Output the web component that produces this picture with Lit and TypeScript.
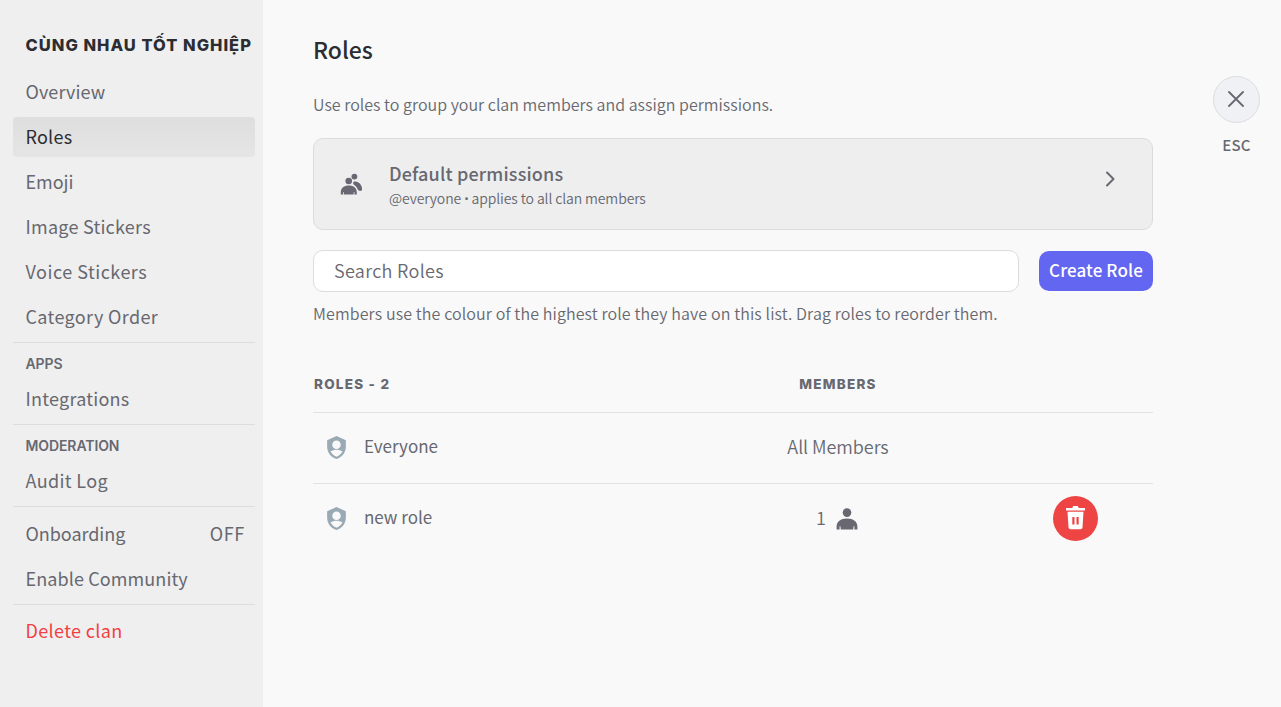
import { LitElement, html, css, svg } from "lit";
import { classMap } from "lit/directives/class-map.js";

type Item = { label: string; state?: string; kind?: string };
type Group = { title?: string; items: Item[] };

const groups: Group[] = [
  {
    items: [
      { label: "Overview", kind: "tight" },
      { label: "Roles", kind: "active" },
      { label: "Emoji", kind: "tighter" },
      { label: "Image Stickers" },
      { label: "Voice Stickers", kind: "wider" },
      { label: "Category Order", kind: "wide" },
    ],
  },
  { title: "Apps", items: [{ label: "Integrations" }] },
  { title: "Moderation", items: [{ label: "Audit Log", kind: "wide" }] },
  { items: [{ label: "Onboarding", state: "OFF", kind: "tighter" }, { label: "Enable Community", kind: "tight" }] },
  { items: [{ label: "Delete clan", kind: "danger wide" }] },
];

const roles = [
  { name: "Everyone", members: null },
  { name: "new role", members: 1 },
];

const person = svg`<circle cx="12" cy="5.6" r="4.3"></circle>
  <path d="M1.6 22.6V19.2C1.6 14.6 5.6 11.4 12 11.4s10.4 3.2 10.4 7.8v3.4h-3v-3.3h-.8l-.4 3.3H5.8l-.4-3.3h-.8v3.3z"></path>`;

class ClanSidebar extends LitElement {
  static styles = css`
    :host {
      display: block;
      box-sizing: border-box;
      width: 263px;
      padding: 30px 8px 0 13px;
      background: #efefef;
      color: #676870;
    }
    .clan {
      padding-left: 12.5px;
      margin-bottom: 12px;
      font: 800 16.5px/30px Inter, sans-serif;
      letter-spacing: 1px;
      text-transform: uppercase;
      white-space: nowrap;
      color: #2b2d33;
    }
    .group {
      display: flex;
      flex-direction: column;
      gap: 5px;
      padding-bottom: 5px;
    }
    .group + .group {
      border-top: 1px solid #dddddf;
      padding-top: 7px;
    }
    .group.titled {
      gap: 0;
      padding-top: 10px;
      padding-bottom: 5px;
    }
    .group:last-child {
      padding-top: 6px;
    }
    .title {
      padding-left: 12.5px;
      font: 600 14px/22px Inter, sans-serif;
      letter-spacing: -0.1px;
      text-transform: uppercase;
      margin-bottom: 4px;
    }
    .item {
      display: flex;
      justify-content: space-between;
      box-sizing: border-box;
      height: 40px;
      padding: 0 10px 0 12.5px;
      border-radius: 4px;
      line-height: 38px;
      letter-spacing: 0.24px;
      white-space: nowrap;
    }
    .wide {
      letter-spacing: 0.36px;
    }
    .wider {
      letter-spacing: 0.5px;
    }
    .tight {
      letter-spacing: 0.1px;
    }
    .tighter {
      letter-spacing: -0.05px;
    }
    .state {
      letter-spacing: 0.7px;
    }
    .active {
      background: linear-gradient(#dedede, #e5e5e5);
      color: #2b2d33;
    }
    .danger {
      color: #f23f43;
    }
  `;
  render() {
    return html`
      <div class="clan">Cùng nhau tốt nghiệp</div>
      ${groups.map(
        (g) => html`<div class=${classMap({ group: true, titled: !!g.title })}>
          ${g.title ? html`<div class="title">${g.title}</div>` : ""}
          ${g.items.map(
            (i) => html`<div class="item ${i.kind ?? ""}">
              <span>${i.label}</span>${i.state ? html`<span class="state">${i.state}</span>` : ""}
            </div>`
          )}
        </div>`
      )}
    `;
  }
}
customElements.define("clan-sidebar", ClanSidebar);

class RolesPanel extends LitElement {
  static styles = css`
    :host {
      display: block;
      width: 840px;
      padding: 34px 0 0 50px;
      color: #676870;
    }
    h1 {
      margin: 0;
      font-size: 23px;
      font-weight: 500;
      line-height: 30px;
      color: #2b2d33;
    }
    .text {
      font-size: 16px;
      font-weight: 350;
      line-height: 24px;
      letter-spacing: 0.12px;
      white-space: nowrap;
    }
    .intro {
      margin: 28px 0 22px;
      letter-spacing: 0.02px;
    }
    .card {
      display: flex;
      align-items: center;
      box-sizing: border-box;
      height: 92px;
      padding: 0 34px 0 24px;
      border: 1px solid #dcdcdf;
      border-radius: 10px;
      background: #eee;
    }
    .group-icon {
      width: 24px;
      height: 24px;
      margin-right: 27px;
    }
    .card-body {
      flex: 1;
      padding-top: 2px;
    }
    .card-title {
      font-size: 18px;
      font-weight: 500;
      line-height: 26px;
      letter-spacing: 0.17px;
    }
    .card-sub {
      font-size: 14px;
      font-weight: 350;
      line-height: 24px;
      letter-spacing: -0.11px;
    }
    .dot {
      font-family: Roboto, sans-serif;
    }
    .chevron {
      width: 16px;
      height: 20px;
      margin-bottom: 11px;
    }
    .tools {
      display: flex;
      align-items: center;
      gap: 20px;
      margin: 20px 0 9px;
    }
    .search {
      flex: 1;
      box-sizing: border-box;
      height: 42px;
      padding: 0 20px 2px;
      border: 1px solid #dcdcdf;
      border-radius: 10px;
      background: #fff;
      color: #676870;
      font: inherit;
      font-weight: 350;
      letter-spacing: 0.32px;
      outline: none;
    }
    .search::placeholder {
      color: #676870;
      opacity: 1;
    }
    .create {
      width: 114px;
      height: 40px;
      padding: 0 0 3px;
      border: 0;
      border-radius: 10px;
      background: #6366f1;
      color: #fff;
      font: inherit;
      font-size: 17px;
      font-weight: 500;
      letter-spacing: 0.12px;
      white-space: nowrap;
    }
    .row {
      display: grid;
      grid-template-columns: 420px 210px 210px;
      align-items: center;
      box-sizing: border-box;
      height: 71px;
      padding-bottom: 2px;
      border-top: 1px solid #e2e2e4;
    }
    .head {
      height: 56px;
      margin-top: 31px;
      padding: 0;
      border: 0;
      font: 800 13.5px/20px Inter, sans-serif;
      letter-spacing: 1.25px;
    }
    .head .label {
      padding-left: 1px;
    }
    .name {
      display: flex;
      align-items: center;
      gap: 15px;
      padding-left: 11px;
      font-size: 17px;
      line-height: 24px;
    }
    .name span {
      margin-top: -3px;
    }
    .shield {
      width: 25px;
      height: 25px;
      fill: #99aab5;
    }
    .members {
      display: flex;
      justify-content: center;
      align-items: center;
      gap: 9px;
      font-size: 18px;
      font-weight: 350;
      line-height: 24px;
      letter-spacing: -0.05px;
    }
    .members span {
      margin-top: -3px;
    }
    .head .members {
      font: inherit;
      letter-spacing: inherit;
    }
    .user {
      width: 24px;
      height: 24px;
      fill: #696872;
      margin: 1px 1px 0 0;
    }
    .actions {
      display: flex;
      padding-left: 110px;
    }
    .delete {
      display: grid;
      place-items: center;
      width: 45px;
      height: 45px;
      border-radius: 50%;
      background: #ef4444;
    }
  `;
  render() {
    return html`
      <h1>Roles</h1>
      <div class="text intro">Use roles to group your clan members and assign permissions.</div>
      <div class="card">
        <svg class="group-icon" viewBox="0 0 24 24" fill="#696872">
          <circle cx="16.4" cy="4.6" r="2.9"></circle>
          <circle cx="10.7" cy="9" r="3.3"></circle>
          <path d="M2.8 22.5v-2.2c0-4.2 3.2-6.9 8-6.9s8 2.7 8 6.9v2.2h-2.4V20h-.6l-.2 2.5H6l-.2-2.5h-.6v2.5z"></path>
          <path d="M16.2 9.5c2.5-.5 5.2.8 6.7 3.5 1.3 2.3 1.6 4.8.6 5.6-1.2.8-3.2.3-3.7-1-.7-1.9-1.7-3.3-3.5-4.5-1.5-1-1.6-3.2-.1-3.6z"></path>
        </svg>
        <div class="card-body">
          <div class="card-title">Default permissions</div>
          <div class="card-sub">@everyone <span class="dot">•</span> applies to all clan members</div>
        </div>
        <svg class="chevron" viewBox="0 0 16 20" fill="none" stroke="#696872" stroke-width="2" stroke-linecap="round" stroke-linejoin="round">
          <path d="M5 3.5l6.5 6.5L5 16.5"></path>
        </svg>
      </div>
      <div class="tools">
        <input class="search" placeholder="Search Roles" />
        <button class="create">Create Role</button>
      </div>
      <div class="text">Members use the colour of the highest role they have on this list. Drag roles to reorder them.</div>
      <div class="row head">
        <div class="label">ROLES - 2</div>
        <div class="members">MEMBERS</div>
      </div>
      ${roles.map(
        (r) => html`<div class="row">
          <div class="name">
            <svg class="shield" viewBox="0 0 24 24">
              <path fill-rule="evenodd" d="M12 1L3 5v6c0 5.55 3.84 10.74 9 12 5.16-1.26 9-6.45 9-12V5zm0 4.2a4.1 4.1 0 1 1 0 8.2a4.1 4.1 0 0 1 0-8.2zM12 20.8c-2.6-.8-4.7-2.7-5.7-5.2 1.7-1 3.7-1.5 5.7-1.5s4 .5 5.7 1.5c-1 2.5-3.1 4.4-5.7 5.2z"></path>
            </svg>
            <span>${r.name}</span>
          </div>
          <div class="members">
            ${r.members === null
              ? html`<span>All Members</span>`
              : html`<span>${r.members}</span><svg class="user" viewBox="0 0 24 24">${person}</svg>`}
          </div>
          <div class="actions">
            ${r.members === null
              ? ""
              : html`<div class="delete">
                  <svg width="23" height="24" viewBox="0 0 23 24" fill="#fff">
                    <path d="M9.2 0h4.6l1 2h6.2v2.4H2V2h6.200z"></path>
                    <path fill-rule="evenodd" d="M3.500 5.800h16l-1 15.500a2 2 0 0 1-2 1.900h-10a2 2 0 0 1-2-1.900zM8.300 11v7.500h2.200V11zm4.200 0v7.500h2.200V11z"></path>
                  </svg>
                </div>`}
          </div>
        </div>`
      )}
    `;
  }
}
customElements.define("roles-panel", RolesPanel);

class AppRoot extends LitElement {
  static styles = css`
    :host {
      display: flex;
      height: 707px;
      overflow: hidden;
      background: #f9f9f9;
      font-family: "Noto Sans CJK SC", "Noto Sans", sans-serif;
      font-size: 18px;
    }
    .close {
      display: flex;
      flex-direction: column;
      align-items: center;
      gap: 10px;
      width: 47px;
      margin-left: 60px;
      padding-top: 76px;
      color: #676870;
      font-size: 15px;
      font-weight: 500;
      line-height: 24px;
      letter-spacing: 0.3px;
    }
    .circle {
      display: grid;
      place-items: center;
      box-sizing: border-box;
      width: 47px;
      height: 47px;
      padding: 0 1px 1px 0;
      border: 1px solid #dcdde0;
      border-radius: 50%;
      background: #f0f1f5;
    }
  `;
  render() {
    return html`
      <clan-sidebar></clan-sidebar>
      <roles-panel></roles-panel>
      <div class="close">
        <div class="circle">
          <svg width="16" height="16" viewBox="0 0 16 16" stroke="#696872" stroke-width="1.8" stroke-linecap="round">
            <path d="M1 1l14 14M15 1L1 15"></path>
          </svg>
        </div>
        <span>ESC</span>
      </div>
    `;
  }
}
customElements.define("app-root", AppRoot);
